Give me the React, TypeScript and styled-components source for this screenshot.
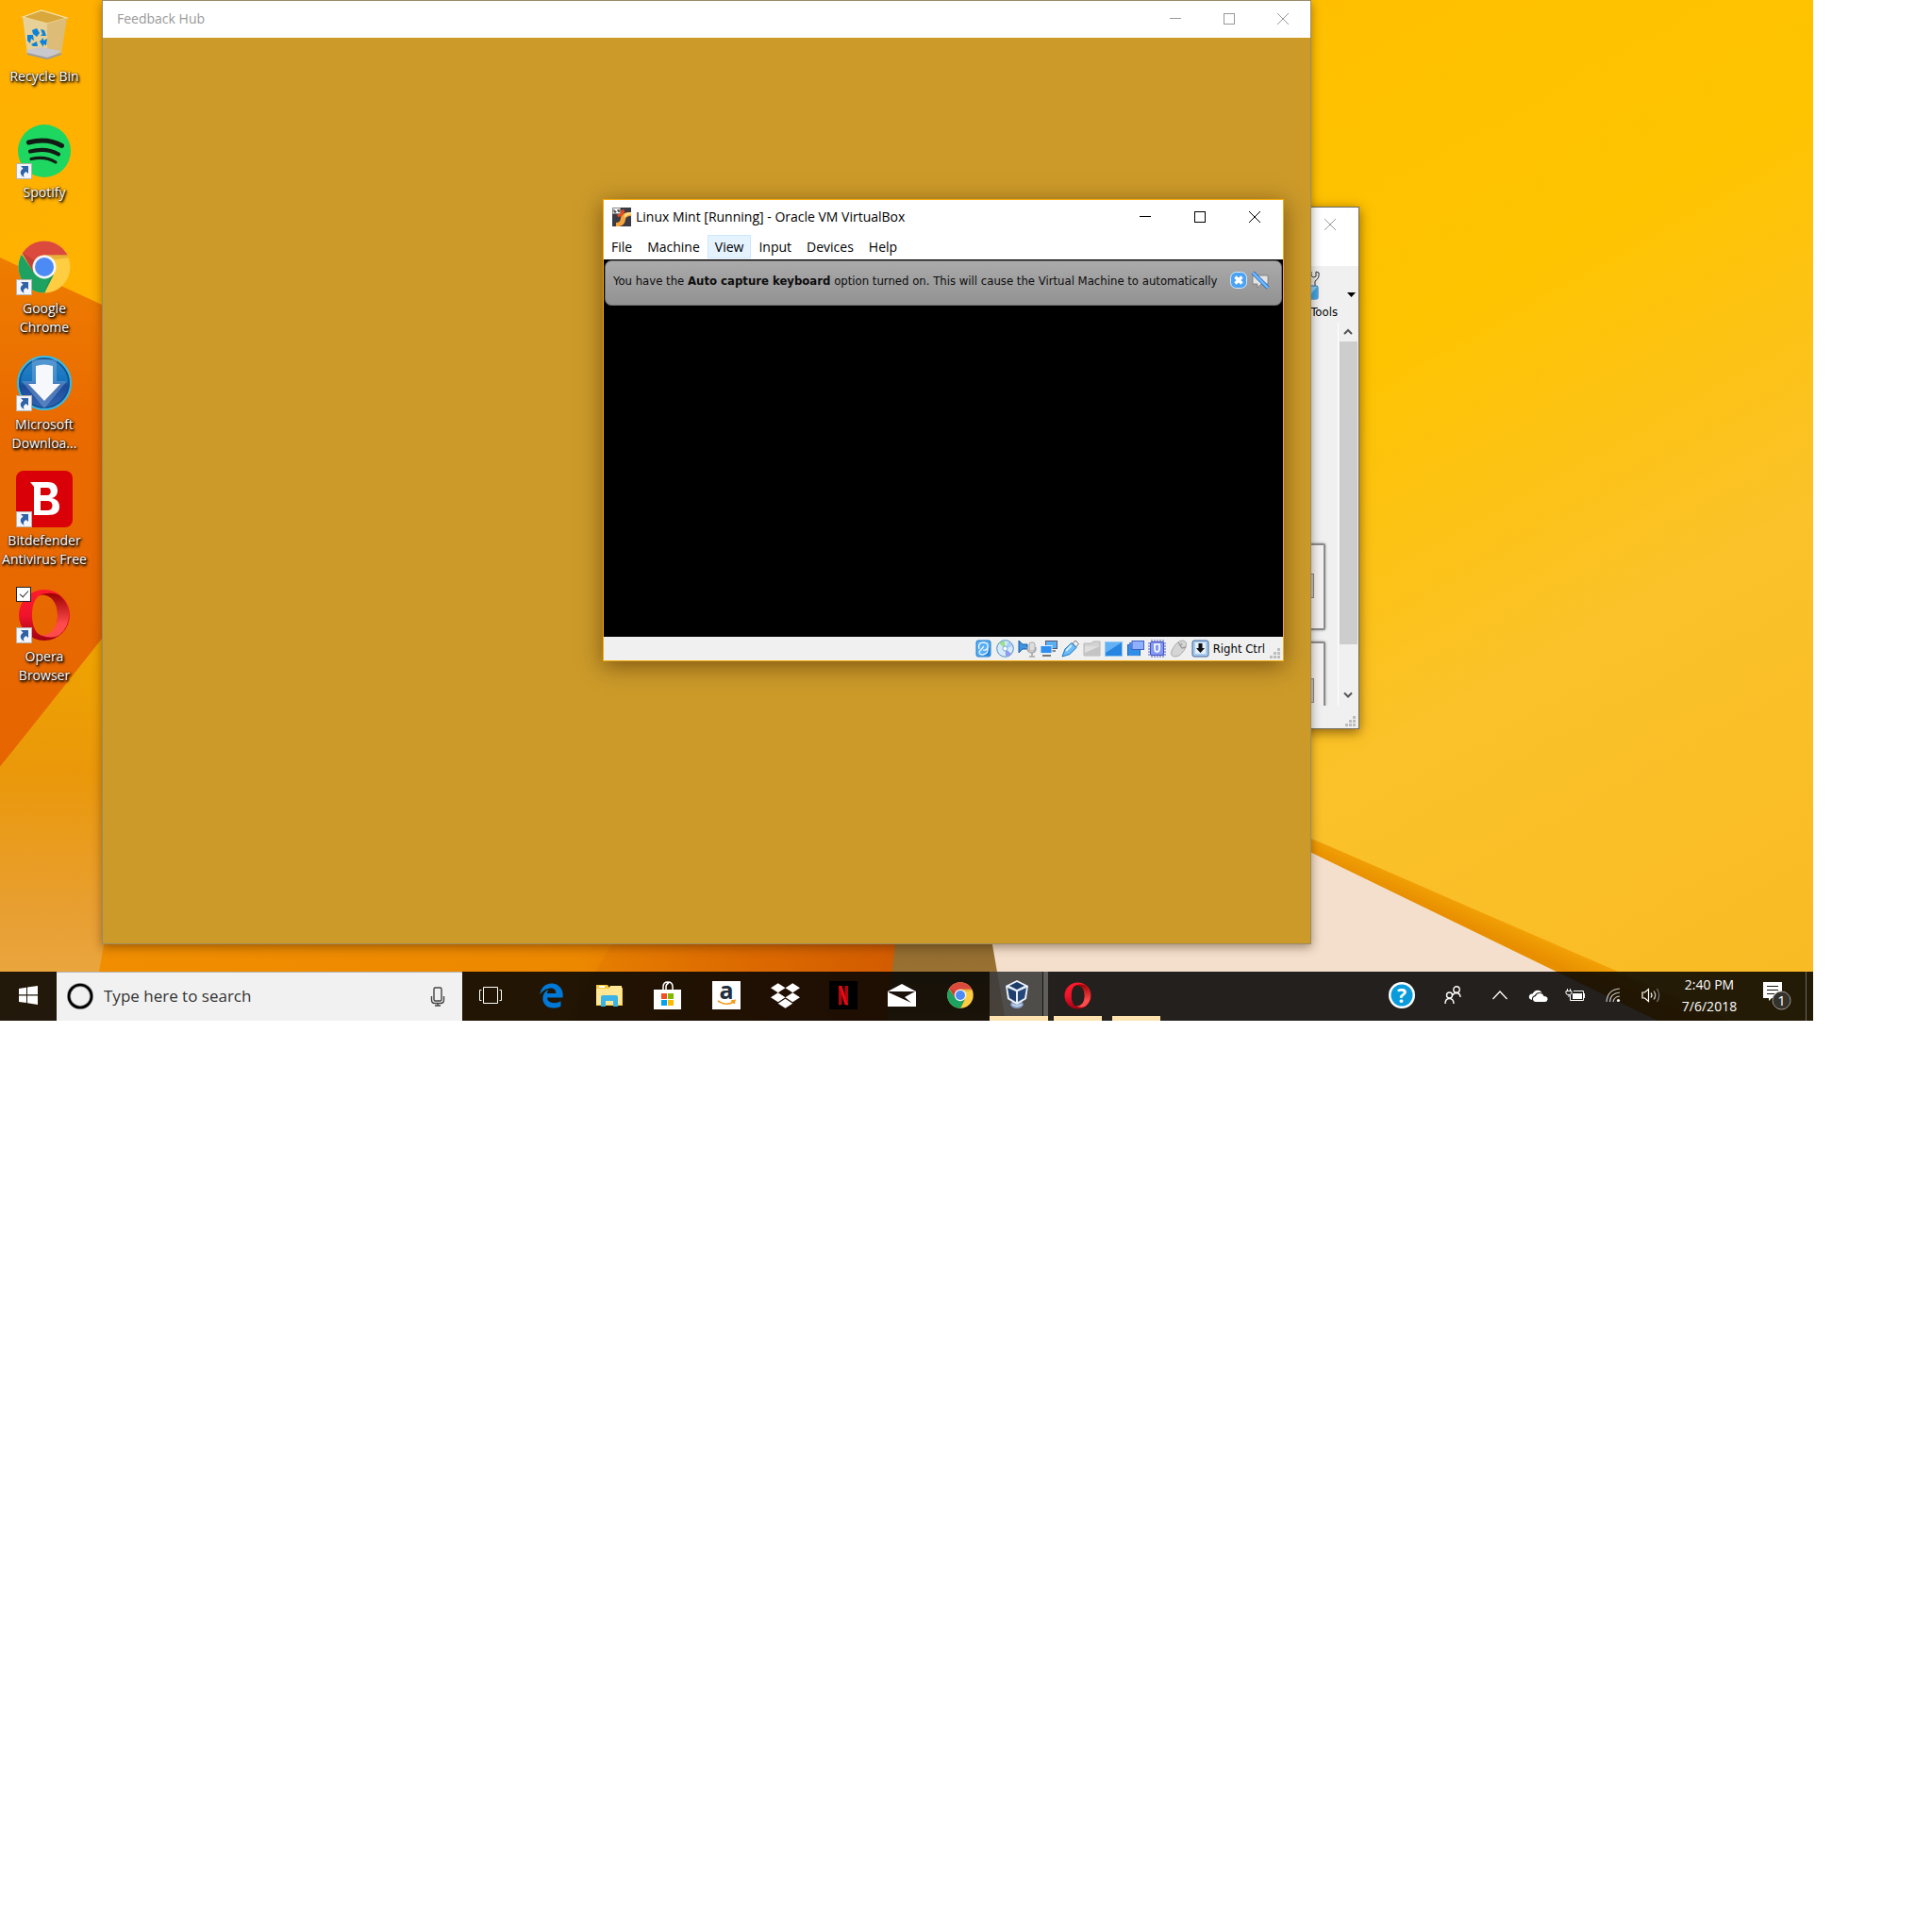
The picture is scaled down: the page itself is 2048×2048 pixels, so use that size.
import React from "react";
import styled, { createGlobalStyle, css } from "styled-components";
import { FaEdgeLegacy, FaDropbox } from "react-icons/fa6";

const UI = `"Open Sans", "Noto Sans", sans-serif`;
const DIALOG = `"DejaVu Sans Condensed", "DejaVu Sans", sans-serif`;

const GlobalStyle = createGlobalStyle`
  *, *::before, *::after { box-sizing: border-box; }
  body { margin: 0; background: #fff; font-family: ${UI}; color: #000; }
  button { border: 0; padding: 0; margin: 0; background: none; font: inherit; color: inherit; }
  svg { display: block; flex: none; overflow: visible; }
`;

const Screen = styled.main`
  position: relative;
  width: 100%;
  max-width: 1922px;
  overflow: hidden;
  display: flex;
  flex-direction: column;
`;

const WallpaperArt = styled.svg`
  position: absolute;
  inset: 0;
  width: 100%;
  height: 100%;
`;

const Workspace = styled.div`
  position: relative;
  min-height: 1030px;
`;

/* ---------- desktop shortcuts ---------- */

const Shortcuts = styled.ul`
  list-style: none;
  margin: 0;
  padding: 7px 0 0;
  width: 94px;
  display: grid;
  grid-auto-rows: 123px;
`;

const Shortcut = styled.li`
  position: relative;
  display: flex;
  flex-direction: column;
  align-items: center;
  gap: 4px;
`;

const ShortcutArt = styled.div`
  position: relative;
  width: 60px;
  height: 60px;
  display: grid;
  place-items: center;
`;

const ShortcutLabel = styled.span`
  color: #fff;
  font-size: 14px;
  line-height: 20px;
  text-align: center;
  white-space: pre;
  text-shadow: 1px 1px 2px #000, 1px 2px 3px #000, 0 0 2px rgba(0, 0, 0, 0.7);
`;

const LinkBadge = styled.svg`
  position: absolute;
  left: 0;
  bottom: 0;
`;

const SelectBox = styled.input`
  appearance: none;
  position: absolute;
  left: 0;
  top: 0;
  margin: 0;
  width: 16px;
  height: 16px;
  border: 1px solid #222;
  background: #fff;
  &:checked::after {
    content: "";
    position: absolute;
    left: 5px;
    top: 1px;
    width: 5px;
    height: 9px;
    border: solid #333;
    border-width: 0 1px 1px 0;
    transform: rotate(42deg);
  }
`;

/* ---------- windows ---------- */

const FeedbackWindow = styled.section`
  position: absolute;
  left: 108px;
  top: 0;
  width: 1282px;
  height: 1001px;
  display: flex;
  flex-direction: column;
  border: 1px solid #998a68;
  background: #cb9a29;
  box-shadow: 0 3px 10px rgba(60, 30, 0, 0.45);
`;

const TitleBar = styled.header<{ $height: number; $muted?: boolean }>`
  display: flex;
  align-items: center;
  flex: none;
  height: ${(p) => p.$height}px;
  padding: 0 1px 2px 0;
  background: #fff;
  color: ${(p) => (p.$muted ? "#999" : "#000")};
`;

const Title = styled.h1<{ $inset: number }>`
  flex: 1;
  display: flex;
  gap: 5px;
  margin: 0;
  padding-left: ${(p) => p.$inset}px;
  font-size: 14px;
  line-height: 20px;
  font-weight: 400;
  white-space: nowrap;
`;

const CaptionButton = styled.button<{ $width: number }>`
  width: ${(p) => p.$width}px;
  height: 100%;
  display: grid;
  place-items: center;
`;

const ManagerWindow = styled.section`
  position: absolute;
  left: 1301px;
  top: 219px;
  width: 140px;
  height: 554px;
  display: flex;
  flex-direction: column;
  border: 1px solid #6e6a60;
  background: #f0f0f0;
  box-shadow: 0 3px 12px rgba(60, 30, 0, 0.6);
`;

const ManagerCaption = styled.div`
  display: flex;
  justify-content: flex-end;
  height: 62px;
  padding-bottom: 26px;
  background: #fff;
  color: #999;
`;

const ManagerToolbar = styled.div`
  display: flex;
  justify-content: flex-end;
  height: 60px;
`;

const ToolButton = styled.button`
  padding-top: 5px;
  display: flex;
  flex-direction: column;
  align-items: flex-end;
  font-family: ${DIALOG};
  font-size: 13px;
  line-height: 18px;
`;

const ToolGlyph = styled.span`
  padding: 0 18px 1px 0;
`;

const ToolArrow = styled.button`
  width: 22px;
  height: 60px;
  display: grid;
  place-items: center;
  padding-left: 6px;
`;

const ManagerBody = styled.div`
  display: flex;
  height: 406px;
  padding-right: 1px;
`;

const DetailPane = styled.div`
  flex: 1;
  display: flex;
  flex-direction: column;
  gap: 12px;
  padding: 234px 13px 0 0;
  overflow: hidden;
  border-right: 1px solid #fff;
`;

const DetailBox = styled.div<{ $inset: number }>`
  flex: none;
  height: 92px;
  display: flex;
  justify-content: flex-end;
  align-items: flex-start;
  padding: ${(p) => p.$inset}px 10px 0 0;
  border: 2px solid #8a8a8a;
  border-radius: 2px;
  box-shadow: 0 0 3px #999;
  background: #f2f0f0;
`;

const Preview = styled.div`
  width: 24px;
  height: 26px;
  border: 1px solid #8a8580;
  background: #dcdad8;
  box-shadow: inset 0 0 0 2px #c9c6c3;
`;

const Scroller = styled.div`
  width: 20px;
  display: flex;
  flex-direction: column;
  align-items: center;
`;

const ScrollStep = styled.button`
  width: 20px;
  height: 20px;
  display: grid;
  place-items: center;
  color: #555;
`;

const ScrollThumb = styled.div`
  width: 19px;
  height: 321px;
  margin-bottom: 44px;
  background: #cdcdcd;
`;

const SizeGripCorner = styled.div`
  margin-top: auto;
  display: flex;
  justify-content: flex-end;
  padding: 0 3px 2px 0;
`;

const MachineWindow = styled.section`
  position: absolute;
  left: 639px;
  top: 211px;
  width: 722px;
  height: 490px;
  display: flex;
  flex-direction: column;
  border: 1px solid #f5ab0c;
  background: #fff;
  box-shadow: 0 5px 22px rgba(60, 30, 0, 0.55);
`;

const MenuBar = styled.nav`
  display: flex;
  flex: none;
  height: 26px;
  background: #fff;
`;

const MenuButton = styled.button<{ $hot?: boolean }>`
  height: 25px;
  padding: 1px 7px 0;
  border: 1px solid transparent;
  font-size: 14px;
  line-height: 22px;
  ${(p) =>
    p.$hot &&
    css`
      background: #e5f3ff;
      border-color: #cce8ff;
    `}
`;

const GuestDisplay = styled.div`
  flex: 1;
  padding: 1px;
  background: #000;
`;

const Notice = styled.div`
  display: flex;
  align-items: flex-start;
  gap: 5px;
  height: 48px;
  padding: 11px 13px 0 8px;
  border: 1px solid #6d6d6d;
  border-radius: 7px;
  background: linear-gradient(#aaa, #929292);
`;

const NoticeText = styled.p`
  flex: 1;
  margin: 0;
  font-family: ${DIALOG};
  font-size: 13px;
  line-height: 20px;
  white-space: nowrap;
  color: #0c0c0c;
`;

const NoticeButton = styled.button`
  width: 18px;
  height: 18px;
`;

const StatusBar = styled.footer`
  display: flex;
  align-items: center;
  justify-content: flex-end;
  gap: 4px;
  flex: none;
  height: 25px;
  background: #f0f0f0;
  padding-right: 3px;
`;

const HostKey = styled.span`
  font-family: ${DIALOG};
  font-size: 13px;
  line-height: 20px;
  margin-right: 1px;
`;

const GripHolder = styled.span`
  align-self: flex-end;
  padding-bottom: 2px;
`;

/* ---------- taskbar ---------- */

const Taskbar = styled.footer`
  position: relative;
  display: flex;
  height: 52px;
  background: rgba(4, 3, 3, 0.87);
  color: #fff;
`;

const TaskButton = styled.button<{ $width?: number; $state?: "active" | "open" }>`
  flex: none;
  width: ${(p) => p.$width ?? 62}px;
  height: 52px;
  padding-bottom: 2px;
  display: grid;
  place-items: center;
  ${(p) =>
    p.$state === "active" &&
    css`
      background: linear-gradient(90deg, rgba(255, 255, 255, 0.2) 56px, rgba(0, 0, 0, 0.3) 56px 57px, rgba(255, 255, 255, 0.28) 57px);
      border-bottom: 5px solid #ffe3ae;
      padding: 0 5px 0 0;
    `}
  ${(p) =>
    p.$state === "open" &&
    css`
      background: linear-gradient(#ffe3ae, #ffe3ae) center bottom / 51px 5px no-repeat;
    `}
`;

const TaskList = styled.div`
  display: flex;
  padding-left: 3px;
`;

const SearchBox = styled.label`
  flex: none;
  width: 430px;
  display: flex;
  align-items: center;
  padding: 0 15px 2px 10px;
  background: #f1f1f1;
  border-top: 1px solid #b5b5b5;
`;

const SearchInput = styled.input`
  flex: 1;
  min-width: 0;
  height: 30px;
  margin-left: 10px;
  padding: 0;
  border: 0;
  background: transparent;
  font-family: ${UI};
  font-size: 17px;
  color: #333;
  &::placeholder {
    color: #333;
    opacity: 1;
  }
`;

const Tray = styled.div`
  display: flex;
  margin-left: auto;
`;

const Clock = styled.time`
  width: 84px;
  padding-top: 2px;
  text-align: center;
  font-size: 14px;
  line-height: 23px;
`;

const ShowDesktop = styled.button`
  width: 8px;
  border-left: 1px solid #6a6560;
`;

/* ---------- drawings ---------- */

const Wallpaper = () => (
  <WallpaperArt viewBox="0 0 1922 1082" preserveAspectRatio="none" aria-hidden="true">
    <defs>
      <linearGradient id="sky" x1="0" y1="0" x2="1" y2="1">
        <stop offset="0" stopColor="#ffb000" />
        <stop offset="0.2" stopColor="#ffb200" />
        <stop offset="0.38" stopColor="#ffc000" />
        <stop offset="0.55" stopColor="#fec400" />
        <stop offset="0.75" stopColor="#fbc22a" />
        <stop offset="1" stopColor="#f9ba24" />
      </linearGradient>
      <linearGradient id="fold" x1="0" y1="0" x2="0" y2="1">
        <stop offset="0" stopColor="#ee7d00" />
        <stop offset="0.3" stopColor="#ea6c00" />
        <stop offset="1" stopColor="#e66500" />
      </linearGradient>
      <linearGradient id="sand" x1="0" y1="0" x2="0" y2="1">
        <stop offset="0" stopColor="#efa400" />
        <stop offset="0.35" stopColor="#ea980a" />
        <stop offset="0.75" stopColor="#e8a035" />
        <stop offset="1" stopColor="#ebab45" />
      </linearGradient>
      <linearGradient id="ember" gradientUnits="userSpaceOnUse" x1="100" y1="0" x2="950" y2="0">
        <stop offset="0" stopColor="#f08e00" />
        <stop offset="0.6" stopColor="#ec8800" />
        <stop offset="0.8" stopColor="#e07000" />
        <stop offset="1" stopColor="#d55e00" />
      </linearGradient>
      <linearGradient id="bronze" gradientUnits="userSpaceOnUse" x1="0" y1="1000" x2="0" y2="1082">
        <stop offset="0" stopColor="#8f6c30" />
        <stop offset="1" stopColor="#ad7a35" />
      </linearGradient>
      <linearGradient id="edge" gradientUnits="userSpaceOnUse" x1="1520" y1="965" x2="1532" y2="938">
        <stop offset="0" stopColor="#e88f00" />
        <stop offset="1" stopColor="#f6aa08" />
      </linearGradient>
    </defs>
    <rect width="1922" height="1082" fill="url(#sky)" />
    <path d="M0 273L108 323V680L0 813Z" fill="url(#fold)" />
    <path d="M0 813L108 677L130 1082H0Z" fill="url(#sand)" />
    <path d="M112 990H950V1082H96Z" fill="url(#ember)" />
    <path d="M655 990H950V1082H600Z" fill="#c84a00" opacity="0.12" />
    <path d="M950 990H1052L1066 1082H940Z" fill="url(#bronze)" />
    <path d="M1050 990V880H1372L1800 1082H1066Z" fill="#f3dfcb" />
    <path d="M1370 880L1835 1082H1757L1370 894Z" fill="url(#edge)" />
  </WallpaperArt>
);

const RecycleBin = () => (
  <svg width="60" height="60" viewBox="0 0 60 60" aria-hidden="true">
    <path d="M7 11L27 4L54 12L33 18Z" fill="#d9a83c" stroke="#f5e2ac" strokeWidth="1.2" />
    <path d="M7 11L33 18L33 55L12 50Z" fill="#e7d199" />
    <path d="M33 18L54 12L48 50L33 55Z" fill="#dcbc76" />
    <path d="M11 46L26 43L48 47L33 55L12 50Z" fill="#c9c8cc" />
    <path d="M12 49L33 54L48 49V51L33 56L12 51Z" fill="#999aa2" />
    <path d="M17 25L22 23L25 28L22 32L18 29ZM26 24L30 25L32 31L26 31L28 29ZM12 30L18 30L19 36L16 34L15 39L12 36ZM16 40L22 37L23 42L18 42ZM25 37L29 33V36L33 34L32 41L29 40V43Z" fill="#0d83d8" />
  </svg>
);

const Spotify = () => (
  <svg width="60" height="60" viewBox="0 0 60 60" aria-hidden="true">
    <circle cx="30" cy="30" r="28" fill="#1ed760" />
    <g fill="none" stroke="#121b14" strokeLinecap="round">
      <path d="M13.500 21Q33 15.500 48.500 24.500" strokeWidth="5" />
      <path d="M15 30.500Q32 26 45 33.500" strokeWidth="4.200" />
      <path d="M16 38.500Q31 35 42 42" strokeWidth="3.200" />
    </g>
  </svg>
);

const Chrome = ({ size, id }: { size: number; id: string }) => (
  <svg width={size} height={size} viewBox="0 0 56 56" aria-hidden="true">
    <defs>
      <clipPath id={id}>
        <circle cx="28" cy="28" r="27.500" />
      </clipPath>
    </defs>
    <g clipPath={`url(#${id})`}>
      <rect width="56" height="56" fill="#fecd41" />
      <path d="M-2 6L17 33.500L28 40.500L38 36L27 58H-4Z" fill="#1da261" />
      <path d="M4 13L-2 -2H58V15.500H28Q20 16 17.500 22L16.500 33Z" fill="#dc4a3d" />
      <path d="M28 15.500H56V18L40 20Z" fill="#d9a22c" opacity="0.6" />
      <path d="M5 13L16.500 34L19 22Z" fill="#a83329" opacity="0.45" />
      <path d="M38 36L27 56L34 40Z" fill="#117a45" opacity="0.4" />
    </g>
    <circle cx="28" cy="28" r="12.500" fill="#f5f5f5" />
    <circle cx="28" cy="28" r="10" fill="#4c8bf5" />
  </svg>
);

const Download = () => (
  <svg width="60" height="60" viewBox="0 0 60 60" aria-hidden="true">
    <defs>
      <linearGradient id="orb" x1="0" y1="0" x2="0" y2="1">
        <stop offset="0" stopColor="#2d86c8" />
        <stop offset="0.45" stopColor="#1673bd" />
        <stop offset="0.55" stopColor="#1c4a98" />
        <stop offset="1" stopColor="#3566b4" />
      </linearGradient>
    </defs>
    <circle cx="30" cy="30" r="28" fill="url(#orb)" stroke="#35bce8" strokeWidth="2" />
    <circle cx="30" cy="30" r="26" fill="none" stroke="#154f91" strokeWidth="1.500" />
    <path d="M17 5H43V28H54L30 57L6 28H17Z" fill="#8fb4df" opacity="0.4" />
    <path d="M21 12Q30 9 39 12V31H47L30 49L13 31H21Z" fill="#f7f8fc" />
  </svg>
);

const Bitdefender = () => (
  <svg width="60" height="60" viewBox="0 0 60 60" aria-hidden="true">
    <rect width="60" height="60" rx="8" fill="#d90007" />
    <path
      fillRule="evenodd"
      fill="#fff"
      d="M15 12H34C41 12 44 16 44 21C44 25 42 28 38 29C43 30 46 33 46 38C46 44 42 47 34 47H19V17ZM26 18V26H33C38 26 38 18 33 18ZM26 32V42H34C40 42 40 32 34 32Z"
    />
  </svg>
);

const Opera = ({ size, id }: { size: number; id: string }) => (
  <svg width={size} height={size} viewBox="0 0 56 56" aria-hidden="true">
    <defs>
      <linearGradient id={`${id}a`} x1="0" y1="0" x2="0" y2="1">
        <stop offset="0" stopColor="#ff1b2d" />
        <stop offset="0.5" stopColor="#f0142b" />
        <stop offset="1" stopColor="#a30013" />
      </linearGradient>
      <linearGradient id={`${id}b`} x1="0" y1="0" x2="0" y2="1">
        <stop offset="0" stopColor="#9c0000" />
        <stop offset="0.7" stopColor="#ff4b4b" />
        <stop offset="1" stopColor="#ff4b4b" />
      </linearGradient>
    </defs>
    <path
      fillRule="evenodd"
      fill={`url(#${id}a)`}
      d="M28 1A27 27 0 1 0 28 55A27 27 0 1 0 28 1ZM28 6C37 6 42 16 42 28C42 40 37 50 28 50C19 50 15 40 15 28C15 16 19 6 28 6Z"
    />
    <path
      fill={`url(#${id}b)`}
      d="M22 8C28 4 37 4 44 7A27 27 0 0 1 44 49C37 53 28 52 22 48C28 52 42 47 42 28C42 9 28 4 22 8Z"
    />
  </svg>
);

const ShortcutArrow = () => (
  <LinkBadge width="17" height="17" viewBox="0 0 17 17" aria-hidden="true">
    <rect x="0.500" y="0.500" width="16" height="16" fill="#f4f5f8" stroke="#b8b4b0" />
    <path d="M5 3H13V11L10.500 9C8 10.500 7.500 12 8.500 15C4 12 3.500 8.500 7.500 5.500Z" fill="#2f62a8" />
  </LinkBadge>
);

const Minimize = () => (
  <svg width="12" height="12" viewBox="0 0 12 12" aria-hidden="true">
    <path d="M0 5.500H12" stroke="currentColor" />
  </svg>
);
const Maximize = () => (
  <svg width="12" height="12" viewBox="0 0 12 12" aria-hidden="true">
    <rect x="0.500" y="0.500" width="11" height="11" fill="none" stroke="currentColor" />
  </svg>
);
const Close = () => (
  <svg width="12" height="12" viewBox="0 0 12 12" aria-hidden="true">
    <path d="M0 0L12 12M12 0L0 12" stroke="currentColor" />
  </svg>
);

const SizeGrip = () => (
  <svg width="11" height="11" viewBox="0 0 11 11" fill="#bdbdbd" aria-hidden="true">
    <path d="M8 0h3v3H8zM8 4h3v3H8zM4 4h3v3H4zM8 8h3v3H8zM4 8h3v3H4zM0 8h3v3H0z" />
  </svg>
);

const Wrench = () => (
  <svg width="30" height="34" viewBox="0 0 30 34" aria-hidden="true">
    <path d="M16 2Q14 9 19 11V17H24V11Q29 8 28 2L25 1V6L22 7L20 5V1Z" fill="#e8e8e8" stroke="#333" />
    <rect x="4" y="16" width="23" height="14" rx="1.500" fill="#8ed0f2" stroke="#1b6cb4" />
    <path d="M16 29L26 17V29Z" fill="#3ba4e4" />
  </svg>
);

const MintIcon = () => (
  <svg width="20" height="20" viewBox="0 0 20 20" aria-hidden="true">
    <rect width="20" height="20" fill="#3a3b45" />
    <path d="M4 16Q9 16 9 11Q10 6 16 5H20V9Q14 9 14 13Q13 19 7 20H4Z" fill="#f9a43a" />
    <path d="M5 7Q9 8 9 3L13 2Q13 10 6 10Z" fill="#e4491f" />
    <path d="M13 7Q16 5 20 5V7Q15 8 13 11Z" fill="#ffe08a" />
    <rect x="0.500" y="0.500" width="8" height="6" fill="#fff" stroke="#888" />
    <path d="M2 2v3h2V4H2M6 2v2h2M7 2v3" stroke="#333" fill="none" />
  </svg>
);

const NoticeClose = () => (
  <svg width="18" height="18" viewBox="0 0 18 18" aria-hidden="true">
    <rect x="0.500" y="0.500" width="17" height="17" rx="6" fill="#4ba3f5" stroke="#d6eaff" />
    <path d="M5.500 5.500L12.500 12.500M12.500 5.500L5.500 12.500" stroke="#fff" strokeWidth="3.400" />
  </svg>
);
const NoticeMute = () => (
  <svg width="18" height="18" viewBox="0 0 18 18" aria-hidden="true">
    <path d="M1 4H17V13H10L6 17V13H1Z" fill="#e4e4e4" stroke="#777" strokeWidth="0.800" />
    <path d="M1 1L17 17" stroke="#1c5fb0" strokeWidth="4" />
    <path d="M1 1L17 17" stroke="#6db9ff" strokeWidth="2.600" />
  </svg>
);

const statusArt: { name: string; art: React.ReactNode }[] = [
  {
    name: "Hard disks",
    art: (
      <>
        <rect x="2" y="1" width="15" height="17" rx="2" fill="#58aef5" stroke="#1d78c8" />
        <path d="M9 17L16 8V17Z" fill="#2484df" />
        <path d="M5 10Q3 3 10 3Q15 4 14 8Q13 12 9 11M14 8Q15 15 9 16Q5 16 5 13L10 7" stroke="#e6f4ff" fill="none" strokeWidth="1.300" />
      </>
    ),
  },
  {
    name: "Optical drives",
    art: (
      <>
        <circle cx="9.500" cy="9.500" r="8.800" fill="#d8e9f8" stroke="#4a8fca" />
        <path d="M9.500 9.500L3 4A8 8 0 0 1 9 1.500Z" fill="#9be08c" />
        <path d="M9.500 9.500L16 15A8 8 0 0 1 10 17.500Z" fill="#8f9cf0" />
        <path d="M9.500 9.500L17 7A8 8 0 0 0 13 2Z" fill="#a5cdfa" />
        <circle cx="9.500" cy="9.500" r="2.500" fill="#fff" stroke="#70a8d8" />
      </>
    ),
  },
  {
    name: "Audio",
    art: (
      <>
        <path d="M1 1L5 5H10V10H5L1 14Z" fill="#3f94e4" stroke="#155fa6" />
        <rect x="12" y="3" width="6" height="9" rx="2" fill="#ddd" stroke="#aaa" />
        <path d="M10 8Q10 14 15 14Q19 14 19 8M15 14V18M12 18H18" stroke="#a5a5a5" strokeWidth="1.500" fill="none" />
      </>
    ),
  },
  {
    name: "Network",
    art: (
      <>
        <rect x="6.500" y="1.500" width="12" height="8" fill="#5ab0f5" stroke="#557" />
        <path d="M10 12H17" stroke="#888" strokeWidth="2" />
        <rect x="1" y="6.500" width="12" height="8" fill="#2e8ff0" stroke="#dfefff" />
        <path d="M3 17H12" stroke="#777" strokeWidth="2" />
      </>
    ),
  },
  {
    name: "USB",
    art: (
      <>
        <path d="M12 4L15 1L18.500 4.500L15.500 8Z" fill="#eee" stroke="#777" />
        <path d="M1 18L4 10L11 3.500L16 8.500L9 15.500Z" fill="#6bbcf8" stroke="#1974c4" />
        <path d="M5 12L11 6" stroke="#d3edff" strokeWidth="2" />
      </>
    ),
  },
  {
    name: "Shared folders",
    art: (
      <>
        <path d="M1 4H9L11 2H18V17H1Z" fill="#d2d2d2" stroke="#b5b5b5" />
        <path d="M2 7H18V17H2Z" fill="#c4c4c4" />
        <path d="M2 7H18L2 14Z" fill="#dedede" />
      </>
    ),
  },
  {
    name: "Display",
    art: (
      <>
        <rect x="0.500" y="2.500" width="18" height="15" fill="#2785e2" stroke="#8fc6f5" />
        <path d="M1 3H18L1 14Z" fill="#61b1f5" />
      </>
    ),
  },
  {
    name: "Recording",
    art: (
      <>
        <rect x="1.500" y="5.500" width="13" height="12" fill="#2f8fe8" stroke="#1c64ae" />
        <path d="M1 17.500H15" stroke="#ddd" />
        <rect x="6" y="1.500" width="12.500" height="9" fill="#8fb0ff" stroke="#3e62c4" />
        <path d="M3 3H6V9H3Z" fill="#5280e0" />
      </>
    ),
  },
  {
    name: "Processor",
    art: (
      <>
        <path d="M4 0V19M7 0V19M10 0V19M13 0V19M16 0V19M0 4H19M0 7H19M0 10H19M0 13H19M0 16H19" stroke="#4c5cc8" />
        <rect x="2.500" y="2.500" width="14" height="14" rx="1.500" fill="#8398f2" stroke="#4354bf" />
        <path d="M7 5V9Q7 13 9.500 13Q12 13 12 9V5Z" fill="none" stroke="#fff" strokeWidth="1.700" />
      </>
    ),
  },
  {
    name: "Mouse integration",
    art: (
      <>
        <path d="M2 12Q7 1 14 1Q19 2 17 8Q12 18 6 18Q0 18 2 12Z" fill="#d5d5d5" stroke="#aaa" />
        <path d="M9 3L13 9L17 8M13 4L11 7" stroke="#999" fill="none" strokeWidth="1.300" />
      </>
    ),
  },
  {
    name: "Keyboard",
    art: (
      <>
        <rect x="1" y="1" width="17" height="17" rx="2" fill="#a9cbee" stroke="#3c6796" />
        <rect x="4" y="3" width="11" height="12" fill="#e3effa" />
        <path d="M7.500 4H11.500V9H14L9.500 14L5 9H7.500Z" fill="#111" />
      </>
    ),
  },
];

const VBox = () => (
  <svg width="26" height="30" viewBox="0 0 26 30" aria-hidden="true">
    <path d="M8 22H18L20 26Q18 30 13 30Q8 30 6 26Z" fill="#8ba4cc" />
    <path d="M8 26Q13 29 18 26" fill="none" stroke="#e4ecf8" />
    <path d="M13 0L25 6L23 20L13 26L3 20L1 6Z" fill="#e9eff8" />
    <path d="M13 2L21 6L13 10L5 6Z" fill="#1d3d68" />
    <path d="M3 8L12 12V23L5 19Z" fill="#1f406e" />
    <path d="M23 8L14 12V23L21 19Z" fill="#24487a" />
  </svg>
);

const tasks: { name: string; state?: "active" | "open"; art: React.ReactNode }[] = [
  { name: "Microsoft Edge", art: <FaEdgeLegacy size={27} color="#0078d7" /> },
  {
    name: "File Explorer",
    art: (
      <svg width="28" height="24" viewBox="0 0 28 24" aria-hidden="true">
        <path d="M0 1H12L14 4H28V23H0Z" fill="#f8ca3e" />
        <path d="M0 5H13L15 2H27V22H0Z" fill="#ffe793" />
        <path d="M3 2H9V4H3Z" fill="#fff" />
        <path d="M5 24V14Q5 12 7 12H21Q23 12 23 14V24H18V18H10V24Z" fill="#3bb3e6" />
      </svg>
    ),
  },
  {
    name: "Microsoft Store",
    art: (
      <svg width="30" height="30" viewBox="0 0 30 30" aria-hidden="true">
        <path d="M10 10V6Q10 1 15 1Q20 1 20 6V10M13 10V6Q13 3 16 2" fill="none" stroke="#fff" strokeWidth="1.500" />
        <path d="M0 9H29V30H0Z" fill="#fff" />
        <path d="M8 13h6v6H8z" fill="#f25022" />
        <path d="M15 13h6v6h-6z" fill="#7fba00" />
        <path d="M8 20h6v6H8z" fill="#00a4ef" />
        <path d="M15 20h6v6h-6z" fill="#ffb900" />
      </svg>
    ),
  },
  {
    name: "Amazon",
    art: (
      <svg width="30" height="30" viewBox="0 0 30 30" aria-hidden="true">
        <rect width="30" height="30" fill="#fff" />
        <text x="15" y="19" textAnchor="middle" fontFamily="Open Sans" fontWeight="700" fontSize="25" fill="#232f3e">
          a
        </text>
        <path d="M6 21Q15 27 23 22M20 21L24 20.500L23 24" fill="none" stroke="#f59b1c" strokeWidth="1.600" />
      </svg>
    ),
  },
  { name: "Dropbox", art: <FaDropbox size={31} color="#fff" /> },
  {
    name: "Netflix",
    art: (
      <svg width="30" height="30" viewBox="0 0 30 30" aria-hidden="true">
        <rect width="30" height="30" fill="#000" />
        <path d="M10 5H13.500V25L10 25.500ZM16.500 5H20V25.500L16.500 25Z" fill="#b1060f" />
        <path d="M10 5H13.500L20 25.500L16.500 25Z" fill="#e50914" />
      </svg>
    ),
  },
  {
    name: "Mail",
    art: (
      <svg width="30" height="24" viewBox="0 0 30 24" aria-hidden="true">
        <path d="M0 8L15 0L30 8V24H0Z" fill="#fff" />
        <path d="M1 8H29L18 14L25 20L1 9Z" fill="#1a120b" />
      </svg>
    ),
  },
  { name: "Google Chrome", art: <Chrome size={28} id="chromeTask" /> },
  { name: "Oracle VM VirtualBox", state: "active", art: <VBox /> },
  { name: "Opera", state: "open", art: <Opera size={29} id="operaTask" /> },
  { name: "Feedback Hub", state: "open", art: null },
];

const trayItems: { name: string; width: number; art: React.ReactNode }[] = [
  {
    name: "Get Help",
    width: 48,
    art: (
      <svg width="28" height="28" viewBox="0 0 28 28" aria-hidden="true">
        <circle cx="14" cy="14" r="14" fill="#fff" />
        <circle cx="14" cy="14" r="11.500" fill="#0a9bdc" />
        <text x="14" y="21.500" textAnchor="middle" fontFamily="Open Sans" fontWeight="700" fontSize="21" fill="#fff">
          ?
        </text>
      </svg>
    ),
  },
  {
    name: "People",
    width: 60,
    art: (
      <svg width="18" height="20" viewBox="0 0 18 20" fill="none" stroke="#fff" strokeWidth="1.400" aria-hidden="true">
        <circle cx="5.500" cy="10" r="3" />
        <path d="M1 19Q1 13.500 5.500 13.500Q10 13.500 10 19" />
        <circle cx="13" cy="4" r="3.200" />
        <path d="M9 10Q10 7.500 13 7.500Q17 8 17 12" />
      </svg>
    ),
  },
  {
    name: "Show hidden icons",
    width: 40,
    art: (
      <svg width="16" height="10" viewBox="0 0 16 10" fill="none" stroke="#fff" strokeWidth="1.300" aria-hidden="true">
        <path d="M0.500 9L8 1L15.500 9" />
      </svg>
    ),
  },
  {
    name: "OneDrive",
    width: 40,
    art: (
      <svg width="21" height="13" viewBox="0 0 21 13" aria-hidden="true">
        <path d="M4 11Q0 10 1 6.500Q2 4 4.500 4.500Q7 -0.500 12 1Q14 2 14.500 3.500Q9 2 7 6Q3.500 7 4 11Z" fill="#fff" />
        <path d="M8 13Q5 12.500 5 10Q5 7.500 8 7Q9 3.500 13 4Q16 4.500 16.500 7Q21 7 20.500 10.500Q20 13 17.500 13Z" fill="#fff" />
      </svg>
    ),
  },
  {
    name: "Battery",
    width: 40,
    art: (
      <svg width="20" height="14" viewBox="0 0 20 14" fill="none" stroke="#fff" aria-hidden="true">
        <path d="M8 2.500H18.500V12.500H4.500V7M19.500 5V10M1.500 0V2M4.500 0V2M0 2.500H6V5Q6 6.500 3 6.500Q0 6.500 0 5ZM3 6.500V9" />
        <path d="M7 5H17V11H7Z" fill="#fff" stroke="none" />
      </svg>
    ),
  },
  {
    name: "Network",
    width: 40,
    art: (
      <svg width="16" height="16" viewBox="0 0 16 16" fill="none" stroke="#fff" strokeWidth="1.200" aria-hidden="true">
        <path d="M1 15Q2 2 15 1M4.500 15Q5 6 15 5M8 15Q9 9.500 15 9" stroke="#c4c0ba" />
        <circle cx="13.500" cy="13.500" r="1.600" fill="#fff" stroke="none" />
      </svg>
    ),
  },
  {
    name: "Volume",
    width: 40,
    art: (
      <svg width="20" height="16" viewBox="0 0 20 16" fill="none" stroke="#fff" strokeWidth="1.200" aria-hidden="true">
        <path d="M1 5H3.500L7.500 1.500V14.500L3.500 11H1ZM10 5.500Q12 8 10 10.500" />
        <path d="M13 3.500Q16.500 8 13 12.500" stroke="#ccc" />
        <path d="M16.500 1Q21 8 16.500 15" stroke="#777" />
      </svg>
    ),
  },
];

const shortcuts: { label: string; link?: boolean; selected?: boolean; art: React.ReactNode }[] = [
  { label: "Recycle Bin", art: <RecycleBin /> },
  { label: "Spotify", link: true, art: <Spotify /> },
  { label: "Google\nChrome", link: true, art: <Chrome size={56} id="chromeDesk" /> },
  { label: "Microsoft\nDownloa...", link: true, art: <Download /> },
  { label: "Bitdefender\nAntivirus Free", link: true, art: <Bitdefender /> },
  { label: "Opera\nBrowser", link: true, selected: true, art: <Opera size={56} id="operaDesk" /> },
];

const Caption = ({ width }: { width: number }) => (
  <>
    <CaptionButton $width={width} aria-label="Minimize">
      <Minimize />
    </CaptionButton>
    <CaptionButton $width={width} aria-label="Maximize">
      <Maximize />
    </CaptionButton>
    <CaptionButton $width={width} aria-label="Close">
      <Close />
    </CaptionButton>
  </>
);

const Chevron = ({ down }: { down?: boolean }) => (
  <svg width="10" height="8" viewBox="0 0 10 8" fill="none" stroke="currentColor" strokeWidth="2" aria-hidden="true">
    <path d={down ? "M1 1.500L5 5.500L9 1.500" : "M1 6L5 2L9 6"} />
  </svg>
);

const menus = ["File", "Machine", "View", "Input", "Devices", "Help"];

export default function App() {
  return (
    <>
      <GlobalStyle />
      <Screen>
        <Wallpaper />
        <Workspace>
          <Shortcuts>
            {shortcuts.map((s) => (
              <Shortcut key={s.label}>
                <ShortcutArt>
                  {s.art}
                  {s.link && <ShortcutArrow />}
                  {s.selected && <SelectBox type="checkbox" defaultChecked aria-label="Select Opera Browser" />}
                </ShortcutArt>
                <ShortcutLabel>{s.label}</ShortcutLabel>
              </Shortcut>
            ))}
          </Shortcuts>

          <ManagerWindow aria-label="VirtualBox Manager">
            <ManagerCaption>
              <CaptionButton $width={60} aria-label="Close">
                <Close />
              </CaptionButton>
            </ManagerCaption>
            <ManagerToolbar>
              <ToolButton>
                <ToolGlyph>
                  <Wrench />
                </ToolGlyph>
                Tools
              </ToolButton>
              <ToolArrow aria-label="More tools">
                <svg width="9" height="5" viewBox="0 0 9 5" aria-hidden="true">
                  <path d="M0 0H9L4.500 5Z" />
                </svg>
              </ToolArrow>
            </ManagerToolbar>
            <ManagerBody>
              <DetailPane>
                <DetailBox $inset={30}>
                  <Preview />
                </DetailBox>
                <DetailBox $inset={37}>
                  <Preview />
                </DetailBox>
              </DetailPane>
              <Scroller>
                <ScrollStep aria-label="Scroll up">
                  <Chevron />
                </ScrollStep>
                <ScrollThumb />
                <ScrollStep aria-label="Scroll down">
                  <Chevron down />
                </ScrollStep>
              </Scroller>
            </ManagerBody>
            <SizeGripCorner>
              <SizeGrip />
            </SizeGripCorner>
          </ManagerWindow>

          <FeedbackWindow>
            <TitleBar $height={39} $muted>
              <Title $inset={15}>Feedback Hub</Title>
              <Caption width={57} />
            </TitleBar>
          </FeedbackWindow>

          <MachineWindow>
            <TitleBar $height={37}>
              <Title $inset={9}>
                <MintIcon />
                Linux Mint [Running] - Oracle VM VirtualBox
              </Title>
              <Caption width={58} />
            </TitleBar>
            <MenuBar>
              {menus.map((m) => (
                <MenuButton key={m} $hot={m === "View"}>
                  {m}
                </MenuButton>
              ))}
            </MenuBar>
            <GuestDisplay>
              <Notice>
                <NoticeText>
                  You have the <b>Auto capture keyboard</b> option turned on. This will cause the Virtual Machine to
                  automatically
                </NoticeText>
                <NoticeButton aria-label="Close message">
                  <NoticeClose />
                </NoticeButton>
                <NoticeButton aria-label="Do not show again">
                  <NoticeMute />
                </NoticeButton>
              </Notice>
            </GuestDisplay>
            <StatusBar>
              {statusArt.map((s) => (
                <svg key={s.name} width="19" height="19" viewBox="0 0 19 19" role="img" aria-label={s.name}>
                  {s.art}
                </svg>
              ))}
              <HostKey>Right Ctrl</HostKey>
              <GripHolder>
                <SizeGrip />
              </GripHolder>
            </StatusBar>
          </MachineWindow>
        </Workspace>

        <Taskbar>
          <TaskButton $width={60} aria-label="Start">
            <svg width="20" height="20" viewBox="0 0 20 20" fill="#fff" aria-hidden="true">
              <path d="M0 3L8 1.800V9.300H0ZM9 1.600L20 0V9.300H9ZM0 10.400H8V18L0 17ZM9 10.400H20V20L9 18.300Z" />
            </svg>
          </TaskButton>
          <SearchBox>
            <svg width="30" height="30" viewBox="0 0 30 30" aria-hidden="true">
              <circle cx="15" cy="15" r="12" fill="none" stroke="#999" strokeWidth="4" />
              <circle cx="15" cy="15" r="12" fill="none" stroke="#000" strokeWidth="2.600" />
            </svg>
            <SearchInput type="text" placeholder="Type here to search" aria-label="Type here to search" />
            <svg width="22" height="22" viewBox="0 0 22 22" fill="none" stroke="#444" strokeWidth="1.400" aria-hidden="true">
              <rect x="7" y="2" width="8" height="14" rx="1.500" />
              <path d="M4.500 11V15Q4.500 18.500 8 18.500H14Q17.500 18.500 17.500 15V11M11 18.500V21M8 21H14" />
            </svg>
          </SearchBox>
          <TaskButton $width={60} aria-label="Task View">
            <svg width="24" height="18" viewBox="0 0 24 18" fill="none" stroke="#fff" aria-hidden="true">
              <path d="M4.500 0.500H19.500V17.500H4.500ZM2.500 3.500H0.500V14.500H2.500M21.500 3.500H23.500V14.500H21.500" />
            </svg>
          </TaskButton>
          <TaskList>
            {tasks.map((t) => (
              <TaskButton key={t.name} $state={t.state} aria-label={t.name}>
                {t.art}
              </TaskButton>
            ))}
          </TaskList>
          <Tray>
            {trayItems.map((t) => (
              <TaskButton key={t.name} $width={t.width} aria-label={t.name}>
                {t.art}
              </TaskButton>
            ))}
            <Clock>
              2:40 PM
              <br />
              7/6/2018
            </Clock>
            <TaskButton $width={60} aria-label="Notifications">
              <svg width="30" height="30" viewBox="0 0 30 30" aria-hidden="true">
                <path d="M0 1H20V18H9L6 21V18H0Z" fill="#fff" />
                <path d="M4 5.500H16M4 9.500H16M4 13.500H12" stroke="#1d160a" />
                <circle cx="19.500" cy="20.500" r="9.500" fill="#35312b" stroke="#9b9893" />
                <text x="19.500" y="26" textAnchor="middle" fontFamily="Open Sans" fontSize="15" fill="#fff">
                  1
                </text>
              </svg>
            </TaskButton>
            <ShowDesktop aria-label="Show desktop" />
          </Tray>
        </Taskbar>
      </Screen>
    </>
  );
}
